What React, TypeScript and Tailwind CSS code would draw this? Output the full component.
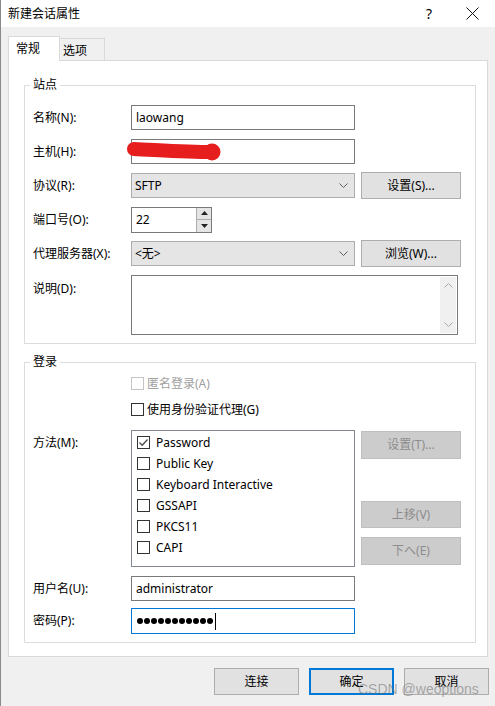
import type { ReactNode } from 'react'

function Btn({
  children,
  disabled,
  primary,
  className = '',
}: {
  children: ReactNode
  disabled?: boolean
  primary?: boolean
  className?: string
}) {
  const look = disabled
    ? 'bg-[#cccccc] border border-[#bfbfbf] text-[#8c8c8c]'
    : primary
      ? 'bg-[#e1e1e1] border-2 border-[#0078d7] text-black'
      : 'bg-[#e1e1e1] border border-[#adadad] text-black'
  return (
    <div className={`flex items-center justify-center shrink-0 ${look} ${className}`}>{children}</div>
  )
}

function Chevron() {
  return (
    <svg width="9" height="5" viewBox="0 0 9 5" className="shrink-0">
      <polyline points="0.5,0.5 4.5,4.5 8.5,0.5" fill="none" stroke="#606060" strokeWidth="1" />
    </svg>
  )
}

function Combo({ value }: { value: string }) {
  return (
    <div className="flex h-full w-[224px] items-center border border-[#adadad] bg-[#e5e5e5] pl-[3px] pr-[6px]">
      <span className="flex-1">{value}</span>
      <Chevron />
    </div>
  )
}

function Check({ checked, disabled }: { checked?: boolean; disabled?: boolean }) {
  return (
    <span
      className={`flex h-[13px] w-[13px] shrink-0 items-center justify-center border bg-white ${
        disabled ? 'border-[#c4c4c4]' : 'border-[#333333]'
      }`}
    >
      {checked && (
        <svg width="11" height="11" viewBox="0 0 11 11">
          <polyline points="1.5,5.5 4.2,8.2 9.5,2.5" fill="none" stroke="#4a4a4a" strokeWidth="1.3" />
        </svg>
      )}
    </span>
  )
}

const METHODS = ['Password', 'Public Key', 'Keyboard Interactive', 'GSSAPI', 'PKCS11', 'CAPI']

export default function App() {
  return (
    <div className="relative flex h-[706px] w-[495px] flex-col overflow-hidden border-l border-[#8a8a8a] bg-[#f0f0f0] text-[12px] leading-[16px] text-black font-['Noto_Sans','Noto_Sans_CJK_SC',sans-serif]">
      {/* Title bar */}
      <div className="flex h-[27px] shrink-0 items-center bg-white pl-[7px] pr-[16px]">
        <span className="text-[12px]">新建会话属性</span>
        <span className="ml-auto w-[14px] text-center text-[14px]">?</span>
        <svg width="13" height="13" viewBox="0 0 13 13" className="ml-[30px]">
          <path d="M0.5 0.5 L12.5 12.5 M12.5 0.5 L0.5 12.5" stroke="#111" strokeWidth="1" />
        </svg>
      </div>

      {/* Tabs */}
      <div className="relative z-10 mt-[9px] flex h-[24px] items-end pl-[7px]">
        <div className="-mb-px h-[25px] w-[52px] border border-b-0 border-[#d9d9d9] bg-white pl-[7px] pt-[4px]">
          常规
        </div>
        <div className="h-[22px] w-[45px] border border-b-0 border-l-0 border-[#d9d9d9] bg-[#f0f0f0] pl-[3px] pt-[4px]">
          选项
        </div>
      </div>

      {/* Panel */}
      <div className="ml-[7px] h-[597px] w-[480px] border border-[#d9d9d9] bg-white pl-[15px]">
        {/* 站点 */}
        <fieldset className="mt-[16px] w-[452px] border border-[#dcdcdc] px-[8px] pb-[8px] pt-[12px]">
          <legend className="ml-[-3px] px-[3px] leading-[16px]">站点</legend>
          <div className="flex flex-col gap-[9px]">
            <div className="flex h-[25px] items-center">
              <span className="w-[98px]">名称(N):</span>
              <div className="flex h-full w-[224px] items-center border border-[#7a7a7a] pl-[4px]">laowang</div>
            </div>
            <div className="flex h-[25px] items-center">
              <span className="w-[98px]">主机(H):</span>
              <div className="relative h-full w-[224px] border border-[#7a7a7a]">
                <svg width="96" height="26" viewBox="0 0 96 26" className="absolute left-[-5px] top-[-1px]">
                  <path
                    d="M7 10 C 30 11, 60 13, 84 13"
                    fill="none"
                    stroke="#e61e1e"
                    strokeWidth="14"
                    strokeLinecap="round"
                  />
                  <circle cx="85" cy="13" r="8.5" fill="#e61e1e" />
                </svg>
              </div>
            </div>
            <div className="flex h-[25px] items-center">
              <span className="w-[98px]">协议(R):</span>
              <Combo value="SFTP" />
              <Btn className="ml-[6px] h-[27px] w-[100px]">设置(S)...</Btn>
            </div>
            <div className="flex h-[25px] items-center">
              <span className="w-[98px]">端口号(O):</span>
              <div className="flex h-[26px] w-[81px] border border-[#7a7a7a]">
                <span className="flex flex-1 items-center pl-[4px]">22</span>
                <div className="flex w-[15px] flex-col border-l border-[#adadad]">
                  <div className="flex flex-1 items-center justify-center border-b border-[#adadad] bg-[#e5e5e5]">
                    <svg width="7" height="4" viewBox="0 0 7 4">
                      <polygon points="0,4 7,4 3.5,0" fill="#222" />
                    </svg>
                  </div>
                  <div className="flex flex-1 items-center justify-center bg-[#e5e5e5]">
                    <svg width="7" height="4" viewBox="0 0 7 4">
                      <polygon points="0,0 7,0 3.5,4" fill="#222" />
                    </svg>
                  </div>
                </div>
              </div>
            </div>
            <div className="flex h-[25px] items-center">
              <span className="w-[98px]">代理服务器(X):</span>
              <Combo value="<无>" />
              <Btn className="ml-[6px] h-[27px] w-[100px]">浏览(W)...</Btn>
            </div>
            <div className="flex items-start">
              <span className="w-[98px] pt-[6px]">说明(D):</span>
              <div className="flex h-[60px] w-[327px] justify-end border border-[#7a7a7a] p-px">
                <div className="flex w-[16px] flex-col items-center justify-between bg-[#f0f0f0] py-[6px]">
                  <svg width="9" height="5" viewBox="0 0 9 5">
                    <polyline points="0.5,4.5 4.5,0.5 8.5,4.5" fill="none" stroke="#a8a8a8" />
                  </svg>
                  <svg width="9" height="5" viewBox="0 0 9 5">
                    <polyline points="0.5,0.5 4.5,4.5 8.5,0.5" fill="none" stroke="#a8a8a8" />
                  </svg>
                </div>
              </div>
            </div>
          </div>
        </fieldset>

        {/* 登录 */}
        <fieldset className="mt-[10px] w-[452px] border border-[#dcdcdc] px-[8px] pb-[8px] pt-[7px]">
          <legend className="ml-[-3px] px-[3px] leading-[16px]">登录</legend>
          <div className="flex flex-col">
            <label className="ml-[98px] flex h-[13px] items-center gap-[3px] text-[#a0a0a0]">
              <Check disabled />
              <span>匿名登录(A)</span>
            </label>
            <label className="ml-[98px] mt-[13px] flex h-[13px] items-center gap-[3px]">
              <Check />
              <span>使用身份验证代理(G)</span>
            </label>
            <div className="mt-[14px] flex items-start">
              <span className="flex h-[25px] w-[98px] items-center">方法(M):</span>
              <div className="h-[137px] w-[224px] border border-[#828790] pl-[5px] pt-px">
                {METHODS.map((m, i) => (
                  <div key={m} className="flex h-[21px] items-center gap-[6px]">
                    <Check checked={i === 0} />
                    <span>{m}</span>
                  </div>
                ))}
              </div>
              <div className="ml-[6px] flex flex-col">
                <Btn disabled className="mt-px h-[28px] w-[100px]">设置(T)...</Btn>
                <Btn disabled className="mt-[42px] h-[27px] w-[100px]">上移(V)</Btn>
                <Btn disabled className="mt-[9px] h-[28px] w-[100px]">下へ(E)</Btn>
              </div>
            </div>
            <div className="mt-[9px] flex h-[25px] items-center">
              <span className="w-[98px]">用户名(U):</span>
              <div className="flex h-full w-[224px] items-center border border-[#7a7a7a] pl-[4px]">administrator</div>
            </div>
            <div className="mt-[7px] flex h-[26px] items-center">
              <span className="w-[98px]">密码(P):</span>
              <div className="flex h-full w-[224px] items-center border border-[#0078d7] pl-[4px]">
                {Array.from({ length: 11 }).map((_, i) => (
                  <span key={i} className="flex w-[7px] justify-center">
                    <span className="h-[6px] w-[6px] rounded-full bg-black" />
                  </span>
                ))}
                <span className="ml-[2px] h-[17px] w-px bg-black" />
              </div>
            </div>
          </div>
        </fieldset>
      </div>

      {/* Footer buttons */}
      <div className="mt-[11px] flex justify-end gap-[10px] pr-[6px]">
        <Btn className="h-[27px] w-[85px]">连接</Btn>
        <Btn primary className="h-[27px] w-[85px]">确定</Btn>
        <Btn className="h-[27px] w-[85px]">取消</Btn>
      </div>

      {/* watermark */}
      <span className="pointer-events-none absolute left-[357px] top-[680px] text-[14px] leading-[18px] text-[rgba(110,110,110,0.55)] font-['Liberation_Sans',sans-serif]">
        CSDN @weoptions
      </span>
    </div>
  )
}
